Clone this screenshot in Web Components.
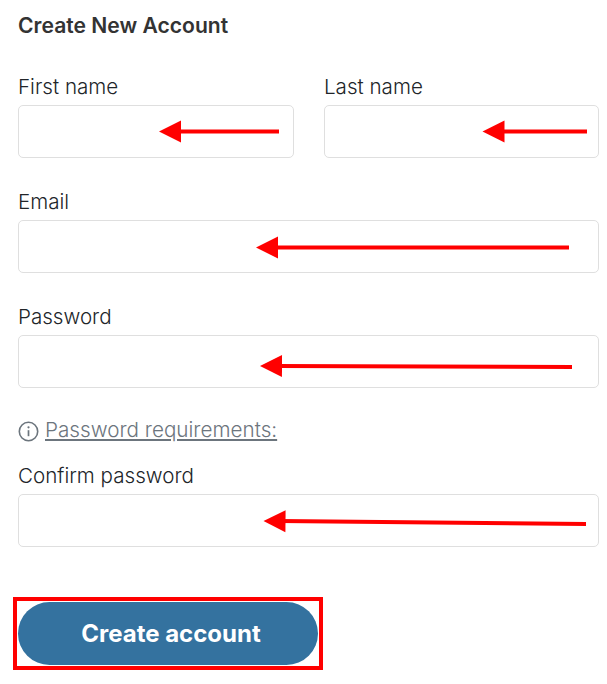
<!DOCTYPE html>
<html>
<head>
<meta charset="utf-8">
<title>Create New Account</title>
<style>
  html, body { margin: 0; background: #fff; }
  body { font-family: Inter, "Liberation Sans", sans-serif; color: #212529; }
</style>
</head>
<body>
<signup-form>
  <form-row>
    <form-field label="First name" x1="141" y1="26.5" x2="261" y2="26.5"></form-field>
    <form-field label="Last name" x1="158.5" y1="26.5" x2="263" y2="26.5"></form-field>
  </form-row>
  <form-field label="Email" x1="238" y1="27.5" x2="551" y2="27.5"></form-field>
  <form-field label="Password" x1="242" y1="31" x2="554" y2="32"></form-field>
  <password-hint>Password requirements:</password-hint>
  <form-field label="Confirm password" x1="245.5" y1="27" x2="568" y2="30"></form-field>
  <submit-button>Create account</submit-button>
</signup-form>

<script>
  class SignupForm extends HTMLElement {
    constructor() {
      super();
      this.attachShadow({mode: 'open'}).innerHTML = `
        <style>
          :host { display: block; padding: 15px 8px 19px 18px; width: 581px; }
          h2 { margin: 0 0 38px; font-size: 21.1px; line-height: 22px; font-weight: 600; color: #333; }
          .fields { display: flex; flex-direction: column; }
        </style>
        <h2>Create New Account</h2>
        <div class="fields"><slot></slot></div>
      `;
    }
  }

  class FormRow extends HTMLElement {
    constructor() {
      super();
      this.attachShadow({mode: 'open'}).innerHTML = `
        <style>
          :host { display: grid; grid-template-columns: 276px 275px; column-gap: 30px; }
        </style>
        <slot></slot>
      `;
    }
  }

  class FormField extends HTMLElement {
    constructor() {
      super();
      const root = this.attachShadow({mode: 'open'});
      const [x1, y1, x2, y2] = ['x1', 'y1', 'x2', 'y2'].map(a => Number(this.getAttribute(a)));
      // arrow head points left, shaft runs to the right
      const angle = Math.atan2(y2 - y1, x2 - x1) * 180 / Math.PI;
      root.innerHTML = `
        <style>
          :host { display: block; margin-bottom: 32px; }
          label { display: block; font-size: 20.6px; line-height: 24px; font-weight: 300; color: #212529; margin-bottom: 6px; }
          .box { position: relative; box-sizing: border-box; height: 53px; border: 1px solid #dfdfdf; border-radius: 5px; background: #fff; }
          svg { position: absolute; left: -1px; top: -1px; overflow: visible; }
        </style>
        <label>${this.getAttribute('label')}</label>
        <div class="box">
          <svg width="10" height="10">
            <line x1="${x1 + 16}" y1="${y1}" x2="${x2}" y2="${y2}" stroke="#f00" stroke-width="4"/>
            <polygon points="0,0 22,-11 22,11" fill="#f00" transform="translate(${x1} ${y1}) rotate(${angle})"/>
          </svg>
        </div>
      `;
    }
  }

  class PasswordHint extends HTMLElement {
    constructor() {
      super();
      this.attachShadow({mode: 'open'}).innerHTML = `
        <style>
          :host { display: flex; align-items: center; gap: 6px; margin: -2px 0 22px; height: 24px; color: #6c757d; font-size: 20.7px; line-height: 24px; font-weight: 300; }
          span { text-decoration: underline; text-decoration-thickness: 2px; text-underline-offset: 2px; }
          svg { display: block; flex: none; margin-top: 3px; }
        </style>
        <svg width="21" height="21" viewBox="0 0 21 21" fill="none" stroke="#6c757d">
          <circle cx="10.5" cy="10.5" r="9.2" stroke-width="1.6"/>
          <path d="M10.5 9.2v6" stroke-width="1.7"/>
          <circle cx="10.5" cy="6.3" r="1.1" fill="#6c757d" stroke="none"/>
        </svg>
        <span><slot></slot></span>
      `;
    }
  }

  class SubmitButton extends HTMLElement {
    constructor() {
      super();
      this.attachShadow({mode: 'open'}).innerHTML = `
        <style>
          :host { display: block; width: 300px; margin-top: 23px; position: relative; }
          button { display: block; box-sizing: border-box; width: 300px; height: 63px; border: 0; border-radius: 32px; background: #34729f; color: #fff; font: 700 24px/26px Inter, "Liberation Sans", sans-serif; padding: 0 0 0 6px; }
          .mark { position: absolute; left: -5px; top: -5px; right: -5px; bottom: -5px; border: 4px solid #f00; box-sizing: border-box; pointer-events: none; }
        </style>
        <button type="button"><slot></slot></button>
        <div class="mark"></div>
      `;
    }
  }

  customElements.define('signup-form', SignupForm);
  customElements.define('form-row', FormRow);
  customElements.define('form-field', FormField);
  customElements.define('password-hint', PasswordHint);
  customElements.define('submit-button', SubmitButton);
</script>
</body>
</html>
